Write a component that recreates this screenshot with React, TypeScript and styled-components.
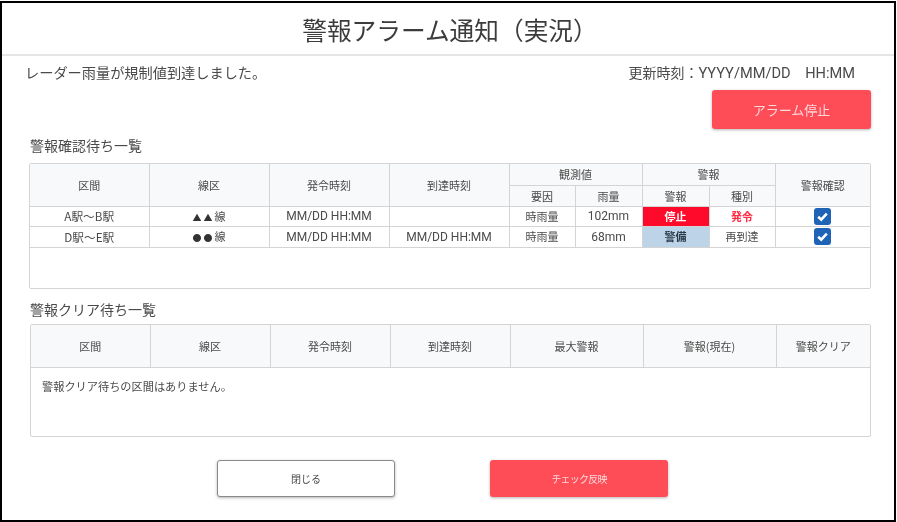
import React from "react"
import styled, { createGlobalStyle } from "styled-components"

const GlobalStyle = createGlobalStyle`
  html, body {
    margin: 0;
    padding: 0;
    background: #fff;
  }
  * {
    box-sizing: border-box;
  }
`

const Frame = styled.div`
  width: 896px;
  height: 521px;
  margin-top: 1px;
  overflow: hidden;
  border: 2px solid #000;
  background: #fff;
  color: #4a4a4a;
  font-family: "Noto Sans CJK JP", "Noto Sans", sans-serif;
  filter: blur(0.35px);
`

const Header = styled.header`
  height: 53px;
  display: flex;
  align-items: center;
  justify-content: center;
  padding-left: 4px;
  border-bottom: 2px solid #e6e6e6;
  font-size: 24.7px;
  color: #3c3c3c;
`

const Content = styled.div`
  padding: 0 24px 0 23px;
`

const InfoRow = styled.div`
  height: 31px;
  display: flex;
  align-items: center;
  justify-content: space-between;
  font-size: 14.2px;
  padding-right: 15px;
`

const UpdatedAt = styled.span`
  display: flex;
  align-items: baseline;
  font-size: 14px;
`

const UpdatedValue = styled.span`
  font-family: Roboto, "Noto Sans CJK JP", sans-serif;
  font-size: 14.6px;
  white-space: pre;
`

const StopRow = styled.div`
  display: flex;
  justify-content: flex-end;
  margin: 3px -1px 0 0;
`

const Button = styled.button<{ $variant: "danger" | "plain"; $small?: boolean }>`
  height: ${(p) => (p.$small ? "37px" : "39px")};
  width: ${(p) => (p.$small ? "178px" : "159px")};
  border-radius: 3px;
  font-family: inherit;
  font-size: ${(p) => (p.$small ? "10px" : "13px")};
  letter-spacing: ${(p) => (p.$small && p.$variant === "danger" ? "-0.8px" : "0")};
  padding: 0;
  cursor: pointer;
  box-shadow: 0 1px 3px rgba(0, 0, 0, 0.3);
  color: ${(p) => (p.$variant === "danger" ? "#ffd9dc" : "#444")};
  background: ${(p) => (p.$variant === "danger" ? "#ff4d58" : "#fff")};
  border: ${(p) => (p.$variant === "danger" ? "none" : "1px solid #8a8a8a")};
`

const SectionTitle = styled.h2<{ $top: number; $gap: number }>`
  margin: ${(p) => p.$top}px 0 ${(p) => p.$gap}px 5px;
  height: 24px;
  display: flex;
  align-items: center;
  font-size: 14px;
  font-weight: 400;
`

const TableBox = styled.div<{ $height: number; $left: number }>`
  height: ${(p) => p.$height}px;
  width: ${(p) => 842 - p.$left}px;
  margin-left: ${(p) => p.$left + 4}px;
  border: 1px solid #d4d4d4;
  border-radius: 2px;
  overflow: hidden;
`

const Table = styled.table`
  width: 100%;
  border-collapse: collapse;
  table-layout: fixed;
  font-size: 11px;
`

const Th = styled.th<{ $h: number; $divided?: boolean }>`
  height: ${(p) => p.$h}px;
  padding: 0;
  font-weight: 400;
  background: #f8f9fb;
  border-right: 1px solid #d4d4d4;
  border-bottom: 1px solid #d4d4d4;
  &:last-child {
    border-right: ${(p) => (p.$divided ? "1px solid #d4d4d4" : "none")};
  }
`

const Td = styled.td<{ $tone?: "stop" | "watch" | "alert"; $latin?: boolean }>`
  height: 20.5px;
  padding: 0;
  text-align: center;
  white-space: nowrap;
  border-right: 1px solid #d4d4d4;
  border-bottom: 1px solid #d4d4d4;
  line-height: 1;
  font-family: ${(p) => (p.$latin ? 'Roboto, "Noto Sans CJK JP", sans-serif' : "inherit")};
  font-size: ${(p) => (p.$latin ? "12px" : "11px")};
  font-weight: ${(p) => (p.$tone ? 700 : 400)};
  color: ${(p) =>
    p.$tone === "stop" ? "#fff" : p.$tone === "alert" ? "#ff2b44" : p.$tone === "watch" ? "#2b3a4a" : "inherit"};
  background: ${(p) => (p.$tone === "stop" ? "#ff0a2a" : p.$tone === "watch" ? "#bcd3e8" : "transparent")};
  &:last-child {
    border-right: none;
  }
`

const SectionName = styled.span`
  font-size: 11.7px;
`

const LineMarks = styled.span`
  font-size: 9px;
  letter-spacing: 2px;
  color: #333;
`

const CheckBox = styled.span`
  display: inline-flex;
  vertical-align: middle;
  width: 17px;
  height: 17px;
  align-items: center;
  justify-content: center;
  border-radius: 3px;
  background: #1e63b5;
`

const EmptyMessage = styled.p`
  margin: 0;
  padding: 10px 0 0 11px;
  font-size: 11.2px;
`

const Footer = styled.div`
  display: flex;
  justify-content: center;
  gap: 95px;
  margin-top: 23px;
  padding-right: 10px;
`

const Check = () => (
  <CheckBox>
    <svg width="13" height="13" viewBox="0 0 13 13" fill="none">
      <path d="M2.2 6.8 5.2 9.7 10.8 3.6" stroke="#fff" strokeWidth="2.6" />
    </svg>
  </CheckBox>
)

const rows = [
  {
    section: "A駅～B駅",
    marks: "▲▲",
    issued: "MM/DD HH:MM",
    reached: "",
    cause: "時雨量",
    rain: "102mm",
    alarm: "停止",
    alarmTone: "stop" as const,
    kind: "発令",
    kindTone: "alert" as const,
  },
  {
    section: "D駅～E駅",
    marks: "●●",
    issued: "MM/DD HH:MM",
    reached: "MM/DD HH:MM",
    cause: "時雨量",
    rain: "68mm",
    alarm: "警備",
    alarmTone: "watch" as const,
    kind: "再到達",
    kindTone: undefined,
  },
]

export default function App() {
  return (
    <>
      <GlobalStyle />
      <Frame>
        <Header>警報アラーム通知（実況）</Header>
        <Content>
          <InfoRow>
            <span>レーダー雨量が規制値到達しました。</span>
            <UpdatedAt>
              更新時刻：<UpdatedValue>{"YYYY/MM/DD　HH:MM"}</UpdatedValue>
            </UpdatedAt>
          </InfoRow>
          <StopRow>
            <Button $variant="danger">アラーム停止</Button>
          </StopRow>
          <SectionTitle $top={4} $gap={6}>警報確認待ち一覧</SectionTitle>
          <TableBox $height={126} $left={0}>
            <Table>
              <colgroup>
                <col width="119" />
                <col width="120" />
                <col width="120" />
                <col width="120" />
                <col width="66" />
                <col width="67" />
                <col width="67" />
                <col width="66" />
                <col />
              </colgroup>
              <thead>
                <tr>
                  <Th $h={21} rowSpan={2}>区間</Th>
                  <Th $h={21} rowSpan={2}>線区</Th>
                  <Th $h={21} rowSpan={2}>発令時刻</Th>
                  <Th $h={21} rowSpan={2}>到達時刻</Th>
                  <Th $h={21} colSpan={2}>観測値</Th>
                  <Th $h={21} colSpan={2}>警報</Th>
                  <Th $h={21} rowSpan={2}>警報確認</Th>
                </tr>
                <tr>
                  <Th $h={21}>要因</Th>
                  <Th $h={21}>雨量</Th>
                  <Th $h={21}>警報</Th>
                  <Th $h={21} $divided>種別</Th>
                </tr>
              </thead>
              <tbody>
                {rows.map((row) => (
                  <tr key={row.section}>
                    <Td><SectionName>{row.section}</SectionName></Td>
                    <Td><LineMarks>{row.marks}</LineMarks>線</Td>
                    <Td $latin>{row.issued}</Td>
                    <Td $latin>{row.reached}</Td>
                    <Td>{row.cause}</Td>
                    <Td $latin>{row.rain}</Td>
                    <Td $tone={row.alarmTone}>{row.alarm}</Td>
                    <Td $tone={row.kindTone}>{row.kind}</Td>
                    <Td><Check /></Td>
                  </tr>
                ))}
              </tbody>
            </Table>
          </TableBox>
          <SectionTitle $top={8} $gap={3}>警報クリア待ち一覧</SectionTitle>
          <TableBox $height={113} $left={1}>
            <Table>
              <colgroup>
                <col width="119" />
                <col width="120" />
                <col width="120" />
                <col width="120" />
                <col width="133" />
                <col width="133" />
                <col />
              </colgroup>
              <thead>
                <tr>
                  <Th $h={42}>区間</Th>
                  <Th $h={42}>線区</Th>
                  <Th $h={42}>発令時刻</Th>
                  <Th $h={42}>到達時刻</Th>
                  <Th $h={42}>最大警報</Th>
                  <Th $h={42}>警報(現在)</Th>
                  <Th $h={42}>警報クリア</Th>
                </tr>
              </thead>
            </Table>
            <EmptyMessage>警報クリア待ちの区間はありません。</EmptyMessage>
          </TableBox>
          <Footer>
            <Button $variant="plain" $small>閉じる</Button>
            <Button $variant="danger" $small>チェック反映</Button>
          </Footer>
        </Content>
      </Frame>
    </>
  )
}
